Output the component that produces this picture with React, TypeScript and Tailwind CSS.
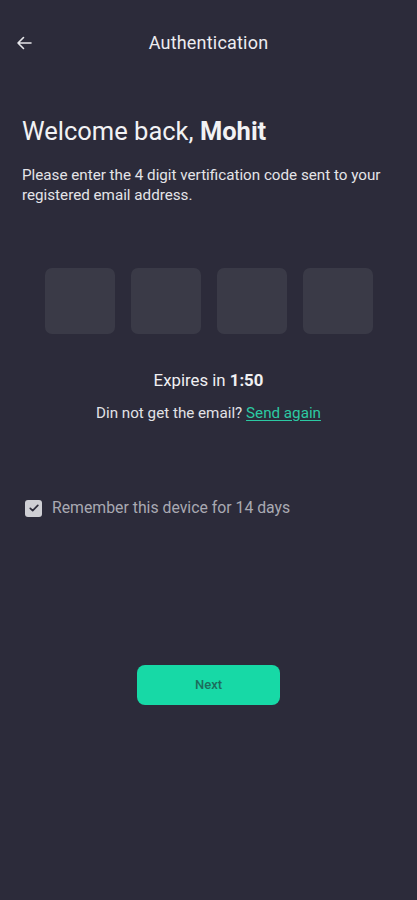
import React from "react";

export default function App() {
  return (
    <div
      className="w-[417px] h-[900px] bg-[#2c2b3a] flex flex-col text-white"
      style={{ fontFamily: "Roboto, 'Noto Sans', sans-serif" }}
    >
      {/* Header */}
      <div className="relative h-[40px] mt-[22px] flex items-center justify-center">
        <button className="absolute left-[15px] top-[12px] w-[18px] h-[18px] flex items-center justify-center">
          <svg width="18" height="18" viewBox="0 0 18 18" fill="none">
            <path d="M16 9H3M8.5 3.5L3 9l5.5 5.5" stroke="#e6e6ea" strokeWidth="1.6" strokeLinecap="round" strokeLinejoin="round" />
          </svg>
        </button>
        <span className="text-[18px] text-[#ececf0] tracking-[0.2px]">Authentication</span>
      </div>

      {/* Welcome */}
      <div className="px-[22px] mt-[54px]">
        <h1 className="text-[25.5px] leading-[30px] text-[#f2f2f4] font-normal">
          Welcome back, <span className="font-bold">Mohit</span>
        </h1>
        <p className="mt-[19px] text-[15.2px] leading-[20px] text-[#e4e4e8]">
          Please enter the 4 digit vertification code sent to your registered email address.
        </p>
      </div>

      {/* Code boxes */}
      <div className="mt-[63px] flex justify-center gap-[16px] pl-[1px]">
        {[0, 1, 2, 3].map((i) => (
          <div key={i} className="w-[70px] h-[66px] rounded-[7px] bg-[#3a3a47]" />
        ))}
      </div>

      {/* Expires */}
      <div className="mt-[35px] text-center text-[16.8px] leading-[22px] text-[#f0f0f2]">
        Expires in <span className="font-bold">1:50</span>
      </div>
      <div className="mt-[12px] text-center text-[15.2px] leading-[20px] text-[#e2e2e6]">
        Din not get the email?{" "}
        <span className="text-[#2cc9a3] underline underline-offset-[2px]">Send again</span>
      </div>

      {/* Remember */}
      <div className="mt-[75px] ml-[25px] h-[20px] flex items-center gap-[10px]">
        <div className="w-[17px] h-[17px] rounded-[3px] bg-[#cfcfd4] flex items-center justify-center">
          <svg width="12" height="12" viewBox="0 0 12 12" fill="none">
            <path d="M2.3 6.3l2.4 2.3L9.8 3.4" stroke="#2c2b3a" strokeWidth="1.7" strokeLinecap="round" strokeLinejoin="round" />
          </svg>
        </div>
        <span className="text-[15.8px] leading-[20px] text-[#a9a9b2]">Remember this device for 14 days</span>
      </div>

      {/* Next button */}
      <div className="mt-[147px] flex justify-center">
        <button className="w-[143px] h-[40px] rounded-[8px] bg-[#17d9a6] text-[13px] text-[#1d6d5c] font-medium">
          Next
        </button>
      </div>
    </div>
  );
}
